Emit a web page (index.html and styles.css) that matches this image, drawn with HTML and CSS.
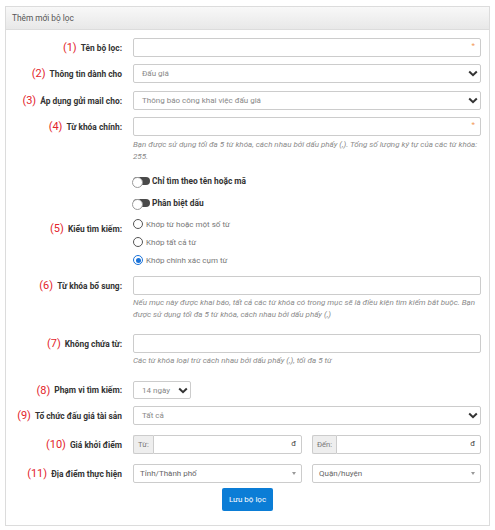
FILE: index.html
```html
<!DOCTYPE html>
<html lang="vi">
<head>
<meta charset="utf-8">
<title>Thêm mới bộ lọc</title>
<link rel="stylesheet" href="styles.css">
</head>
<body>
<div class="panel">
  <div class="panel-head">Thêm mới bộ lọc</div>
  <div class="panel-body">
    <div class="row">
      <label class="lbl"><span class="num">(1)</span>Tên bộ lọc:</label>
      <div class="ctl"><input class="inp" type="text"><span class="req">*</span></div>
    </div>
    <div class="row mt7">
      <label class="lbl"><span class="num">(2)</span>Thông tin dành cho</label>
      <div class="ctl"><div class="sel">Đấu giá</div><svg class="chev" viewBox="0 0 10 7"><polyline points="1.2,1.5 5,5.2 8.8,1.5"/></svg></div>
    </div>
    <div class="row mt8">
      <label class="lbl"><span class="num">(3)</span>Áp dụng gửi mail cho:</label>
      <div class="ctl"><div class="sel">Thông báo công khai việc đấu giá</div><svg class="chev" viewBox="0 0 10 7"><polyline points="1.2,1.5 5,5.2 8.8,1.5"/></svg></div>
    </div>
    <div class="row mt7">
      <label class="lbl"><span class="num">(4)</span>Từ khóa chính:</label>
      <div class="field">
        <div class="ctl"><input class="inp" type="text"><span class="req">*</span></div>
        <p class="help">Bạn được sử dụng tối đa 5 từ khóa, cách nhau bởi dấu phẩy (,). Tổng số lượng ký tự của các từ khóa: 255.</p>
      </div>
    </div>
    <div class="row mt-t1">
      <div></div>
      <div class="toggle"><span class="switch"></span>Chỉ tìm theo tên hoặc mã</div>
    </div>
    <div class="row mt8">
      <div></div>
      <div class="toggle"><span class="switch"></span>Phân biệt dấu</div>
    </div>
    <div class="row mt5">
      <label class="lbl lbl-radio"><span class="num">(5)</span>Kiểu tìm kiếm:</label>
      <div class="radios">
        <div class="radio"><span class="dot"></span>Khớp từ hoặc một số từ</div>
        <div class="radio"><span class="dot"></span>Khớp tất cả từ</div>
        <div class="radio"><span class="dot on"></span>Khớp chính xác cụm từ</div>
      </div>
    </div>
    <div class="row mt7">
      <label class="lbl"><span class="num">(6)</span>Từ khóa bổ sung:</label>
      <div class="field">
        <div class="ctl"><input class="inp" type="text"></div>
        <p class="help help-tight">Nếu mục này được khai báo, tất cả các từ khóa có trong mục sẽ là điều kiện tìm kiếm bắt buộc. Bạn được sử dụng tối đa 5 từ khóa, cách nhau bởi dấu phẩy (,)</p>
      </div>
    </div>
    <div class="row mt13">
      <label class="lbl"><span class="num">(7)</span>Không chứa từ:</label>
      <div class="field">
        <div class="ctl"><input class="inp" type="text"></div>
        <p class="help help-tight">Các từ khóa loại trừ cách nhau bởi dấu phẩy (,), tối đa 5 từ</p>
      </div>
    </div>
    <div class="row mt14">
      <label class="lbl lbl-short"><span class="num">(8)</span>Phạm vi tìm kiếm:</label>
      <div class="ctl ctl-small"><div class="sel">14 ngày</div><svg class="chev" viewBox="0 0 10 7"><polyline points="1.2,1.5 5,5.2 8.8,1.5"/></svg></div>
    </div>
    <div class="row mt7">
      <label class="lbl"><span class="num">(9)</span>Tổ chức đấu giá tài sản</label>
      <div class="ctl"><div class="sel">Tất cả</div><svg class="chev" viewBox="0 0 10 7"><polyline points="1.2,1.5 5,5.2 8.8,1.5"/></svg></div>
    </div>
    <div class="row mt10">
      <label class="lbl"><span class="num">(10)</span>Giá khởi điểm</label>
      <div class="pair">
        <div class="group"><span class="addon">Từ:</span><div class="ctl grow"><input class="inp" type="text"><span class="unit">đ</span></div></div>
        <div class="group"><span class="addon">Đến:</span><div class="ctl grow"><input class="inp" type="text"><span class="unit">đ</span></div></div>
      </div>
    </div>
    <div class="row mt10">
      <label class="lbl"><span class="num">(11)</span>Địa điểm thực hiện</label>
      <div class="pair">
        <div class="ctl"><div class="sel sel-dark">Tỉnh/Thành phố</div><span class="caret"></span></div>
        <div class="ctl"><div class="sel sel-dark">Quận/huyện</div><span class="caret"></span></div>
      </div>
    </div>
    <div class="actions">
      <button class="btn" type="button">Lưu bộ lọc</button>
    </div>
  </div>
</div>
</body>
</html>
```

FILE: styles.css
```css
* { box-sizing: border-box; }
html, body { margin: 0; padding: 0; background: #fff; }
body {
  font-family: Roboto, "Open Sans", Arial, sans-serif;
  font-size: 8px;
  color: #333;
}
.panel {
  margin: 6px 5px 0 5px;
  border: 1px solid #dcdcdc;
  background: #fff;
}
.panel-head {
  height: 23px;
  line-height: 22px;
  padding-left: 6px;
  font-size: 8.3px;
  color: #555;
  background: linear-gradient(#f8f8f8, #e8e8e8);
  border-bottom: 1px solid #dcdcdc;
}
.panel-body {
  padding: 8px 8px 14px 0;
}
.row {
  display: grid;
  grid-template-columns: 117px 348px;
  column-gap: 10px;
}
.mt5 { margin-top: 5px; }
.mt7 { margin-top: 7px; }
.mt8 { margin-top: 8px; }
.mt10 { margin-top: 10px; }
.mt13 { margin-top: 13px; }
.mt14 { margin-top: 14px; }
.mt-t1 { margin-top: 11.5px; }

.lbl {
  display: flex;
  justify-content: flex-end;
  align-items: center;
  gap: 4px;
  height: 19px;
  padding-right: 1px;
  font-weight: 700;
  font-size: 8.4px;
  color: #333;
  white-space: nowrap;
}
.lbl-radio { margin-top: 4px; }
.lbl-short { height: 18px; }
.num {
  font-weight: 400;
  font-size: 11px;
  color: #e3242b;
}
.ctl {
  position: relative;
  height: 19px;
}
.ctl-small { width: 58px; height: 18px; }
.inp, .sel {
  display: block;
  width: 100%;
  height: 100%;
  margin: 0;
  border: 1px solid #ccc;
  border-radius: 2px;
  background: #fff;
  font: inherit;
  padding: 0 8px;
  outline: none;
}
.sel {
  line-height: 17px;
  color: #888;
}
.sel-dark { color: #666; padding-left: 6px; }
.req {
  position: absolute;
  right: 6px;
  top: 4px;
  font-size: 8px;
  line-height: 8px;
  color: #f39a5a;
}
.chev {
  position: absolute;
  right: 3px;
  top: 6px;
  width: 10px;
  height: 7px;
  fill: none;
  stroke: #333;
  stroke-width: 2;
}
.help {
  margin: 2.5px 0 0;
  font-size: 8px;
  line-height: 12px;
  font-style: italic;
  color: #8a8a8a;
}
.help-tight { margin-top: 2px; }
.toggle {
  display: flex;
  align-items: center;
  gap: 2px;
  height: 14px;
  font-weight: 700;
  font-size: 8.4px;
  color: #333;
}
.switch {
  position: relative;
  width: 17px;
  height: 8px;
  border-radius: 4px;
  background: #4a4a4a;
}
.switch::before {
  content: "";
  position: absolute;
  left: -1px;
  top: -0.5px;
  width: 9px;
  height: 9px;
  border-radius: 50%;
  background: #fff;
  border: 1px solid #9a9a9a;
}
.radio {
  display: flex;
  align-items: center;
  gap: 3px;
  height: 18px;
  color: #777;
}
.dot {
  position: relative;
  width: 10px;
  height: 10px;
  border-radius: 50%;
  border: 1px solid #555;
  background: #fff;
}
.dot.on { border-color: #1a73d9; }
.dot.on::after {
  content: "";
  position: absolute;
  left: 1.5px;
  top: 1.5px;
  width: 5px;
  height: 5px;
  border-radius: 50%;
  background: #1a73d9;
}
.pair {
  display: grid;
  grid-template-columns: 1fr 1fr;
  column-gap: 10px;
}
.group {
  display: flex;
  height: 19px;
}
.addon {
  display: flex;
  align-items: center;
  padding: 0 4px;
  background: #eee;
  border: 1px solid #ccc;
  border-right: none;
  border-radius: 2px 0 0 2px;
  color: #777;
  font-size: 7.6px;
}
.grow { flex: 1; }
.grow .inp { border-radius: 0 2px 2px 0; }
.unit {
  position: absolute;
  right: 6px;
  top: 4px;
  font-size: 8px;
  line-height: 9px;
  color: #444;
}
.caret {
  position: absolute;
  right: 6px;
  top: 8px;
  width: 0;
  height: 0;
  border-left: 2.5px solid transparent;
  border-right: 2.5px solid transparent;
  border-top: 3px solid #999;
}
.actions {
  display: flex;
  justify-content: center;
  margin-top: 5px;
  padding-left: 8px;
}
.btn {
  height: 23px;
  padding: 0 6.5px;
  border: none;
  border-radius: 2px;
  background: #0b7dd6;
  color: #fff;
  font-family: inherit;
  font-size: 8px;
}
```
